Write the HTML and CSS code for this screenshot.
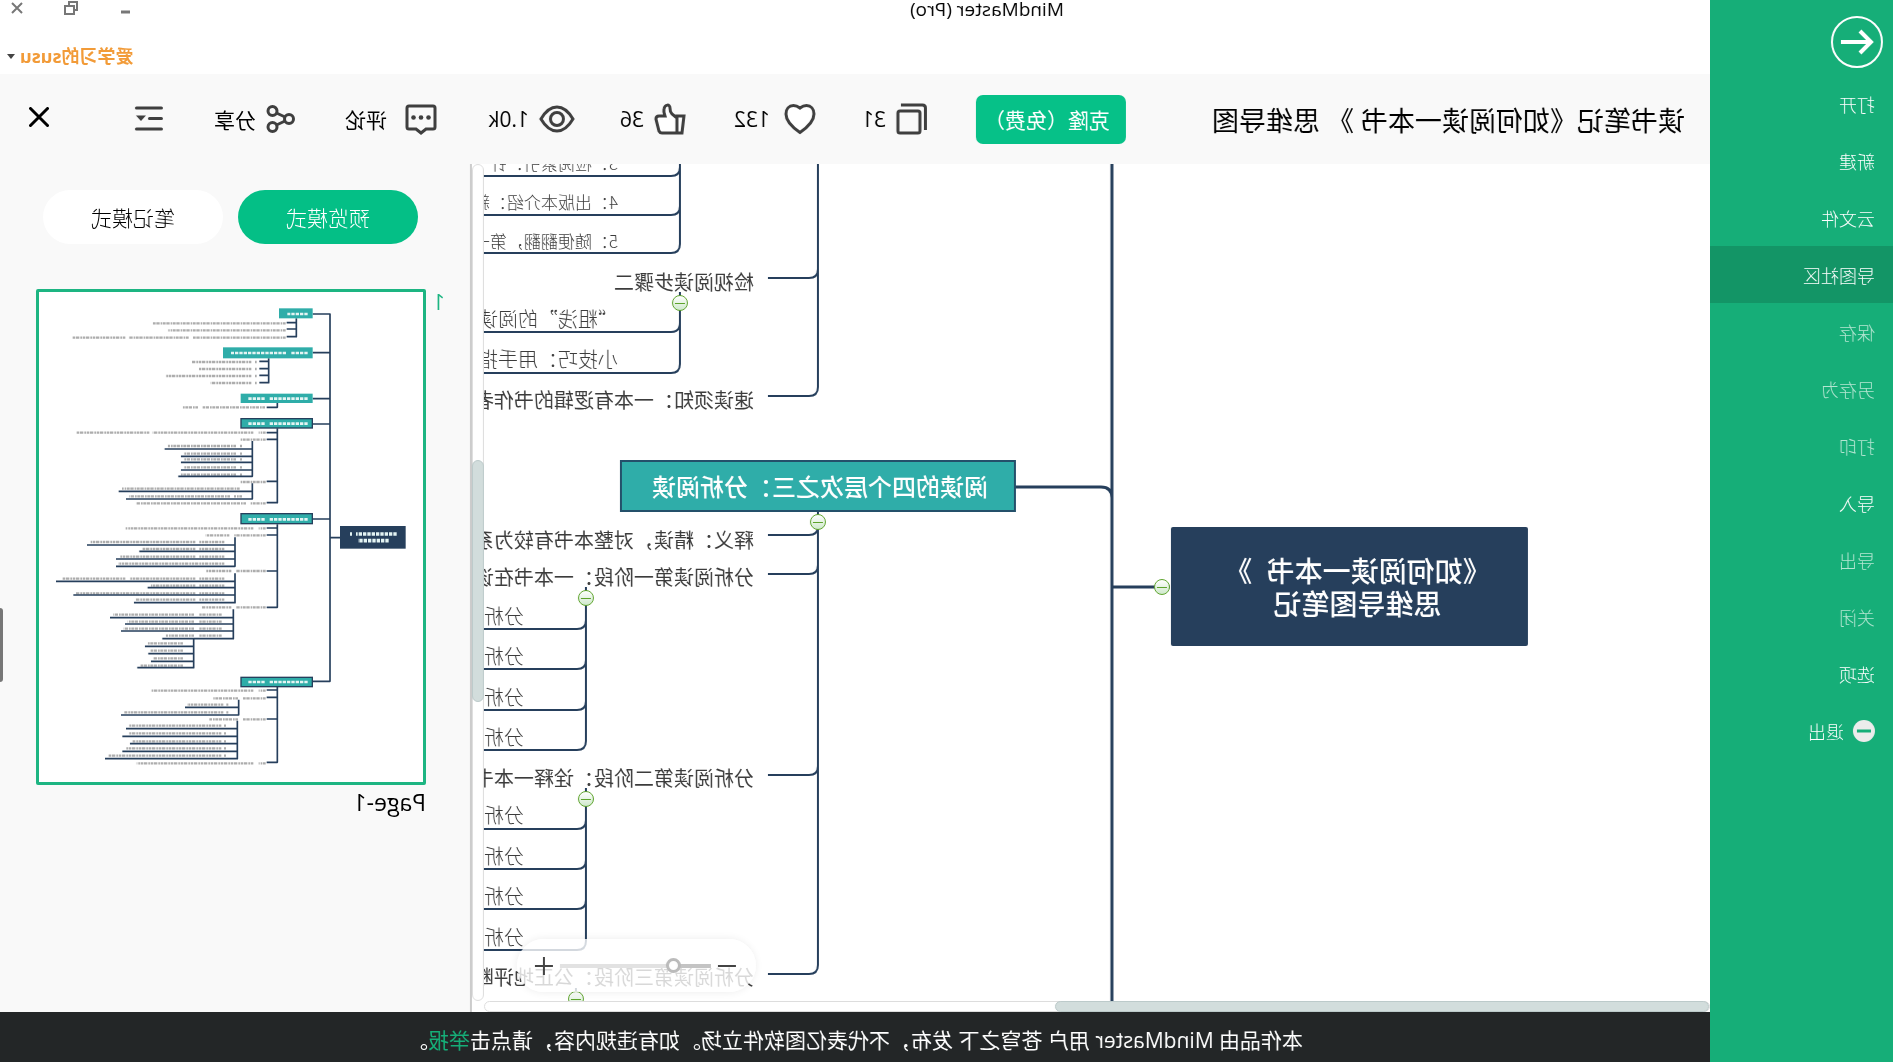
FILE: index.html
```html
<!DOCTYPE html>
<html lang="zh-CN">
<head>
<meta charset="utf-8">
<title>MindMaster (Pro)</title>
<link rel="stylesheet" href="styles.css">
</head>
<body>
<div class="app">
  <aside class="sidebar">
    <button class="back" aria-label="返回">
      <svg width="52" height="52" viewBox="0 0 52 52"><circle cx="26" cy="26" r="25"/><path class="arrow" d="M42 26H13M23 15L12 26l11 11"/></svg>
    </button>
    <nav class="menu">
      <a href="#open">打开</a>
      <a href="#new">新建</a>
      <a href="#cloud">云文件</a>
      <a href="#community" class="active">导图社区</a>
      <a href="#save" class="dim">保存</a>
      <a href="#saveas" class="dim">另存为</a>
      <a href="#print" class="dim">打印</a>
      <a href="#import">导入</a>
      <a href="#export" class="dim">导出</a>
      <a href="#close" class="dim">关闭</a>
      <a href="#options">选项</a>
      <a href="#exit"><svg width="22" height="22" viewBox="0 0 22 22"><circle cx="11" cy="11" r="11" fill="#ececec"/><path d="M4 11h14" stroke="#16ae78" stroke-width="3"/></svg>退出</a>
    </nav>
  </aside>

  <div class="main">
    <header class="titlebar">
      <h1 class="app-name">MindMaster (Pro)</h1>
      <div class="window-side">
        <div class="window-buttons">
          <button aria-label="最小化"><svg width="14" height="14" viewBox="0 0 14 14"><path d="M2 11h9" stroke-width="3"/></svg></button>
          <button aria-label="还原"><svg width="14" height="14" viewBox="0 0 14 14"><path d="M4 5h9v8H4zM4 9H1V1h8v4" stroke-width="2"/></svg></button>
          <button aria-label="关闭窗口"><svg width="14" height="14" viewBox="0 0 14 14"><path d="M2 2l10 10M12 2L2 12" stroke-width="2"/></svg></button>
        </div>
        <button class="user">爱学习的susu<svg width="8" height="5" viewBox="0 0 8 5"><path d="M0 0h8L4 5z" fill="#444"/></svg></button>
      </div>
    </header>

    <div class="toolbar">
      <h2 class="doc-title">读书笔记《如何阅读一本书 》 思维导图</h2>
      <button class="clone">克隆（免费）</button>
      <button class="tool"><svg width="32" height="32" viewBox="0 0 32 32"><rect x="8" y="8" width="22" height="22" rx="2"/><path d="M2.500 27V5q0-3 3-3H27"/></svg>31</button>
      <button class="tool gap-mid"><svg width="32" height="32" viewBox="0 0 32 32"><path fill="#fff" d="M16 29.500C8 24 2 18 2 11C2 6 5 2.500 9.500 2.500c2.500 0 4.500 1 6.500 2.500c2-1.500 4-2.500 6.500-2.500C27 2.500 30 6 30 11c0 7-6 13-14 18.500z"/></svg>132</button>
      <button class="tool"><svg width="32" height="32" viewBox="0 0 32 32"><path fill="#fff" d="M2 13h7v17H4zM9 15l5-4q2-2 2-6c0-4 5-4 6 1c.500 2 0 4-1 7h6q3 0 3 3l-3 12q-1 2-3 2H9z"/></svg>36</button>
      <button class="tool"><svg width="36" height="32" viewBox="0 0 36 32"><path d="M2 16Q9 4 18 4t16 12Q27 28 18 28T2 16z"/><circle cx="18" cy="16" r="6.500"/></svg>1.0k</button>
      <button class="tool gap-wide"><svg width="32" height="32" viewBox="0 0 32 32"><path d="M4 3h24q2 0 2 2v19q0 2-2 2h-7l-5 4-5-4H4q-2 0-2-2V5q0-2 2-2z"/><g fill="#3f3f3f" stroke="none"><circle cx="8.500" cy="14.500" r="2.300"/><circle cx="16" cy="14.500" r="2.300"/><circle cx="23.500" cy="14.500" r="2.300"/></g></svg>评论</button>
      <button class="tool"><svg width="29" height="32" viewBox="0 0 29 32"><circle cx="6" cy="16" r="4.500"/><circle cx="22.500" cy="8" r="4.500"/><circle cx="22.500" cy="24" r="4.500"/><path d="M10 14l8.500-4M10 18l8.500 4"/></svg>分享</button>
      <div class="end-tools">
        <button class="tool" aria-label="大纲"><svg width="28" height="32" viewBox="0 0 28 32"><path d="M1.500 5h25M1.500 15.500h12M1.500 26h25" stroke-linecap="round"/><path d="M17 12.500h10L22 18z" fill="#3f3f3f" stroke="none"/></svg></button>
        <button class="tool" aria-label="关闭"><svg class="cross" width="20" height="24" viewBox="0 0 20 24"><path d="M1.500 1.500l17 17M18.500 1.500l-17 17"/></svg></button>
      </div>
    </div>

    <div class="workspace">
      <section class="canvas">
        <svg class="links" width="100%" height="100%">
          <path stroke-width="3" d="M598 0V1200M540 423H598M598 334Q598 323 609 323H694"/>
          <path stroke-width="2" d="M892 0V223q0 9 9 9h41M892 105q0 9 9 9h41
            M892 348V801q0 9 9 9h41M892 362q0 9 9 9h41M892 401q0 9 9 9h41M892 602q0 9 9 9h41
            M1030 0V80q0 9 9 9h400M1030 3q0 9 9 9h400M1030 42q0 9 9 9h400
            M1030 128V200q0 9 9 9h400M1030 159q0 9 9 9h400
            M1124 423V577q0 9 9 9h400M1124 456q0 9 9 9h400M1124 496q0 9 9 9h400M1124 537q0 9 9 9h400
            M1124 624V777q0 9 9 9h400M1124 656q0 9 9 9h400M1124 696q0 9 9 9h400M1124 736q0 9 9 9h400
            M1134 824V840"/>
        </svg>
        <div class="node root">《如何阅读一本书&nbsp; 》<br>思维导图笔记</div>
        <div class="node branch">阅读的四个层次之三：分析阅读</div>

        <div class="node small" style="left:1092px;top:-2px">3：检阅索引：针</div>
        <div class="node small" style="left:1092px;top:37px">4：出版本介绍：新</div>
        <div class="node small" style="left:1092px;top:76px">5：随便翻翻，第一</div>
        <div class="node topic" style="left:956px;top:117px">检视阅读步骤二</div>
        <div class="node note" style="left:1092px;top:154px">“粗浅”的阅读</div>
        <div class="node note" style="left:1092px;top:194px">小技巧：用手指</div>
        <div class="node topic" style="left:956px;top:235px">速读须知：一本有逻辑的书作者</div>
        <div class="node topic" style="left:956px;top:375px">释义：精读，对整本书有较为系</div>
        <div class="node topic" style="left:956px;top:412px">分析阅读第一阶段：一本书在谈</div>
        <div class="node note" style="left:1186px;top:451px">分析</div>
        <div class="node note" style="left:1186px;top:491px">分析</div>
        <div class="node note" style="left:1186px;top:532px">分析</div>
        <div class="node note" style="left:1186px;top:572px">分析</div>
        <div class="node topic" style="left:956px;top:613px">分析阅读第二阶段：诠释一本书</div>
        <div class="node note" style="left:1186px;top:650px">分析</div>
        <div class="node note" style="left:1186px;top:691px">分析</div>
        <div class="node note" style="left:1186px;top:731px">分析</div>
        <div class="node note" style="left:1186px;top:772px">分析</div>
        <div class="node topic" style="left:956px;top:812px">分析阅读第三阶段：公正地评断</div>

        <button class="fold" aria-label="折叠" style="left:548px;top:423px"></button>
        <button class="fold" aria-label="折叠" style="left:892px;top:358px"></button>
        <button class="fold" aria-label="折叠" style="left:1030px;top:139px"></button>
        <button class="fold" aria-label="折叠" style="left:1124px;top:434px"></button>
        <button class="fold" aria-label="折叠" style="left:1124px;top:635px"></button>
        <button class="fold" aria-label="折叠" style="left:1134px;top:835px"></button>

        <div class="zoom">
          <button class="minus" aria-label="缩小"></button>
          <input type="range" min="0" max="100" value="22" aria-label="缩放">
          <button class="plus" aria-label="放大"></button>
        </div>
      </section>
      <div class="vscroll"><div class="vthumb"></div></div>
      <div class="hscroll"><div class="hthumb"></div></div>

      <aside class="panel">
        <div class="tabs">
          <button class="on">预览模式</button>
          <button>笔记模式</button>
        </div>
        <div class="page-row">
          <span class="page-no">1</span>
          <figure class="page">
            <svg class="preview" viewBox="9 9 1152 1470" role="img" aria-label="Page-1">
              <g class="p-text">
                <path d="M421 103H820M421 124H773M421 146H700M712 146H890M902 146H1060M508 219h5M524 219H703M508 240h5M524 240H681M508 261h5M524 261H781M508 282h5M524 282H646M483 355H670M684 355H730"/>
                <path d="M481 431H502M518 431H820M830 431H1049M481 452H558M552 471h6M570 471H774M552 494h6M570 494H725M552 511h6M570 511H725M552 535h6M570 535H725M552 557h6M570 557H738M481 579H558M559 599H912M552 622h24M588 622H890M481 643H528M540 643H868"/>
                <path d="M481 718H502M518 718H901M481 739H575M590 739H661M605 759H680M692 759H1006M605 780H680M692 780H850M605 803H680M692 803H920M605 824H924M481 846H570M584 846H661M605 869H680M692 869H890M902 869H1090M605 890H680M692 890H825M605 913H680M692 913H1050M605 932H680M692 932H870M481 955H570M584 955H673"/>
                <path d="M613 977H680M696 977H938M613 998H680M696 998H895M613 1019H680M696 1019H907M613 1040H680M696 1040H780M729 1063H836M729 1085H826M729 1108H818M729 1130H856"/>
                <path d="M481 1205H502M518 1205H823M481 1228H550M564 1228H638M593 1247h6M608 1247H717M593 1270h6M608 1270H905M481 1291H550M564 1291H650M600 1310h6M614 1310H890M600 1333h6M614 1333H890M600 1357h6M614 1357H880M600 1378h6M614 1378H900M600 1400h6M614 1400H953M481 1423H502M518 1423H868"/>
              </g>
              <g class="p-line">
                <path d="M340 75H288V1177H340M258 746H288M288 191H340M288 329H340M288 405H340M288 690H340"/>
                <path d="M389 88V143H418M389 101H418M389 120H418M472 208V281H500M472 217H500M472 239H500M472 259H500M446 342V355H478"/>
                <path d="M446 418V641H478M446 431H478M446 451H478M446 577H478M521 456V562H743M521 480H784M521 502H735M521 520H735M521 543H735M521 583V630H900M521 607H922"/>
                <path d="M446 706V955H478M446 717H478M446 738H478M446 846H478M573 745V832H930M573 768H1017M573 787H860M573 810H930M573 853V941H876M573 877H1110M573 896H835M573 918H1058"/>
                <path d="M578 961V1049H791M578 986H948M578 1005H903M578 1026H915M697 1049V1136H866M697 1072H843M697 1094H833M697 1117H825"/>
                <path d="M446 1194V1420H478M446 1203H478M446 1225H478M446 1290H478M562 1232V1278H915M562 1255H723M566 1295V1409H963M566 1319H900M566 1342H911M566 1364H888M566 1387H911"/>
              </g>
              <g class="p-box">
                <rect x="340" y="58" width="101" height="30"/>
                <rect x="340" y="175" width="269" height="33"/>
                <rect x="340" y="314" width="216" height="28"/>
                <rect class="edged" x="341" y="389" width="214" height="28"/>
                <rect class="edged" x="341" y="674" width="214" height="30"/>
                <rect class="edged" x="341" y="1165" width="214" height="28"/>
                <rect class="p-root" x="61" y="711" width="197" height="68"/>
              </g>
              <g class="p-white">
                <path d="M355 75H416M355 192H405M420 192H585M355 329H470M484 329H534M355 404H470M484 404H534M355 691H470M484 691H534M355 1179H470M484 1179H534"/>
                <path class="thick" d="M88 735H210M222 735H228M112 755H204"/>
              </g>
            </svg>
            <figcaption>Page-1</figcaption>
          </figure>
        </div>
        <div class="grip"></div>
      </aside>
    </div>

    <footer class="notice">
      <p>本作品由 MindMaster 用户 苍穹之下 发布，不代表亿图软件立场。如有违规内容，请点击<a href="#report">举报</a>。</p>
    </footer>
  </div>
</div>
</body>
</html>
```

FILE: styles.css
```css
* { box-sizing: border-box; }

body {
  margin: 0;
  font-family: "Open Sans", "Noto Sans CJK SC", sans-serif;
  background: #fff;
  color: #000;
  overflow-x: hidden;
}

button {
  font: inherit;
  color: inherit;
  background: none;
  border: 0;
  padding: 0;
  cursor: pointer;
}

h1, h2, p, figure { margin: 0; font-weight: 400; }

/* The whole window is shown as seen in a mirror. */
.app {
  display: grid;
  grid-template-columns: 183px 1fr;
  min-height: 100vh;
  transform: scaleX(-1);
}

/* Sidebar */
.sidebar { background: #16ae78; color: #fff; }
.back { display: block; margin: 16px 0 7px 10px; height: 52px; }
.back circle { fill: none; stroke: #fff; stroke-width: 2; }
.back .arrow { fill: none; stroke: #fff; stroke-width: 4; }
.menu { display: flex; flex-direction: column; }
.menu a {
  display: flex;
  align-items: center;
  gap: 9px;
  height: 57px;
  padding-left: 18px;
  color: #fff;
  font-size: 18px;
  font-weight: 300;
  text-decoration: none;
}
.menu .active { background: #139566; }
.menu .dim { color: #b4e6d2; }

.main {
  display: grid;
  grid-template-rows: 74px 90px 1fr 50px;
  min-width: 0;
}

/* Title bar */
.titlebar { display: flex; }
.app-name { flex: 1; text-align: center; font-size: 19px; line-height: 18px; }
.window-side {
  width: 264px;
  display: flex;
  flex-direction: column;
  align-items: flex-end;
  gap: 28px;
  padding-right: 7px;
}
.window-buttons { display: flex; gap: 40px; padding-right: 3px; height: 15px; }
.window-buttons svg { display: block; fill: none; stroke: #777; }
.user {
  display: flex;
  align-items: center;
  gap: 5px;
  color: #f29b38;
  font-size: 18px;
  line-height: 26px;
  font-weight: 700;
}

/* Toolbar: column widths are shares of the bar */
.toolbar {
  display: grid;
  grid-template-columns: 559fr 198fr 112fr 130fr 111fr 138fr 142fr 132fr 134fr;
  align-items: center;
  padding: 0 29px 0 25px;
  background: #f9f9f9;
}
.doc-title { font-size: 27px; white-space: nowrap; }
.clone {
  width: 150px;
  height: 49px;
  padding-left: 8px;
  border-radius: 7px;
  background: #06c188;
  color: #fff;
  font-size: 21px;
  white-space: nowrap;
}
.tool {
  display: flex;
  align-items: center;
  gap: 10px;
  font-size: 21px;
  white-space: nowrap;
}
.tool.gap-mid { gap: 14px; }
.tool.gap-wide { gap: 18px; }
.tool svg { flex: none; fill: none; stroke: #3f3f3f; stroke-width: 3; }
.tool .cross { stroke: #000; stroke-linecap: round; }
.end-tools { display: flex; justify-content: space-between; }

/* Workspace */
.workspace {
  display: grid;
  grid-template-columns: 1fr 12px 472px;
  grid-template-rows: 1fr 11px;
  min-height: 848px;
}
.canvas { position: relative; overflow: hidden; min-width: 0; }
.links { position: absolute; inset: 0; fill: none; stroke: #263f5c; }
.node { position: absolute; white-space: nowrap; }
.root {
  left: 182px;
  top: 363px;
  width: 357px;
  height: 119px;
  padding: 28px 16px 0 0;
  border-radius: 2px;
  background: #263f5c;
  color: #fff;
  font-size: 28px;
  line-height: 33px;
  font-weight: 500;
  text-align: center;
}
.branch {
  left: 694px;
  top: 296px;
  width: 396px;
  height: 52px;
  padding-left: 26px;
  border: 2px solid #24506a;
  background: #2fada9;
  color: #fff;
  font-size: 24px;
  line-height: 50px;
  font-weight: 500;
}
.small, .topic, .note {
  line-height: 28px;
  margin-top: -13px;
  color: #3c3c3c;
  font-family: "Noto Sans CJK SC", sans-serif;
}
.small { font-size: 17px; font-weight: 300; }
.topic { font-size: 20px; }
.note { font-size: 20px; font-weight: 300; }
.fold {
  position: absolute;
  width: 16px;
  height: 16px;
  margin: -8px 0 0 -8px;
  border: 1px solid #5da32c;
  border-radius: 50%;
  background: linear-gradient(#5da32c, #5da32c) center / 10px 1px no-repeat, linear-gradient(#fff, #cfe9cc);
}

.zoom {
  position: absolute;
  right: 33px;
  bottom: 9px;
  display: flex;
  align-items: center;
  gap: 7px;
  width: 239px;
  height: 53px;
  padding: 0 18px 0 20px;
  border-radius: 27px;
  background: rgba(255, 255, 255, .8);
  box-shadow: 0 0 8px rgba(0, 0, 0, .08);
}
.zoom button { flex: none; width: 18px; height: 18px; }
.minus { background: linear-gradient(#444, #444) center / 18px 2px no-repeat; }
.plus {
  background:
    linear-gradient(#444, #444) center / 18px 2px no-repeat,
    linear-gradient(#444, #444) center / 2px 18px no-repeat;
}
.zoom input {
  appearance: none;
  flex: 1;
  min-width: 0;
  height: 16px;
  margin: 0;
  background: linear-gradient(90deg, #c4c4c4 24%, #e2e2e2 24%) center / 100% 4px no-repeat;
}
.zoom input::-webkit-slider-thumb {
  appearance: none;
  width: 15px;
  height: 15px;
  border: 3px solid #bbb;
  border-radius: 50%;
  background: #fff;
}

.vscroll, .hscroll { background: #fff; border: 1px solid #ddd; border-radius: 6px; }
.vscroll { grid-column: 2; grid-row: 1; }
.hscroll { grid-column: 1; grid-row: 2; }
.vthumb, .hthumb { background: #d2dddc; border: 1px solid #bccaca; border-radius: 6px; }
.vthumb { height: 29%; margin: 295px -1px 0; }
.hthumb { width: 53.4%; height: 11px; margin-top: -1px; }

/* Preview panel */
.panel {
  position: relative;
  grid-column: 3;
  grid-row: 1 / 3;
  border-left: 2px solid #ccc;
  background: #f9f9f9;
}
.tabs { display: flex; gap: 15px; padding: 26px 0 0 52px; }
.tabs button {
  width: 180px;
  height: 54px;
  border-radius: 27px;
  background: #fff;
  font-size: 21px;
  font-weight: 300;
}
.tabs .on { background: #04bf86; color: #fff; }
.page-row { display: flex; gap: 7px; padding: 45px 0 0 25px; }
.page-no { width: 12px; color: #1db582; font-size: 21px; line-height: 26px; }
.page { width: 390px; }
.preview {
  display: block;
  width: 390px;
  height: 496px;
  border: 3px solid #1db582;
  border-radius: 2px;
  background: #fff;
}
.page figcaption { font-size: 23px; line-height: 34px; }
.p-text { fill: none; stroke: #777; stroke-width: 7; stroke-dasharray: 8 2 5 3 10 2; opacity: .6; }
.p-line { fill: none; stroke: #263f5c; stroke-width: 5; stroke-linejoin: round; }
.p-box { fill: #2fada9; }
.p-box .edged { stroke: #263f5c; stroke-width: 4; }
.p-box .p-root { fill: #263f5c; }
.p-white { fill: none; stroke: #e4f4f3; stroke-width: 8; stroke-dasharray: 10 3; }
.p-white .thick { stroke-width: 11; }
.grip {
  position: absolute;
  right: 0;
  top: 444px;
  width: 3px;
  height: 74px;
  border-radius: 3px 0 0 3px;
  background: #777;
}

/* Notice bar */
.notice {
  padding-top: 6px;
  background: #232627;
  color: #fff;
  font-size: 21px;
  line-height: 44px;
  text-align: center;
}
.notice a { color: #16ae78; text-decoration: none; }
```
